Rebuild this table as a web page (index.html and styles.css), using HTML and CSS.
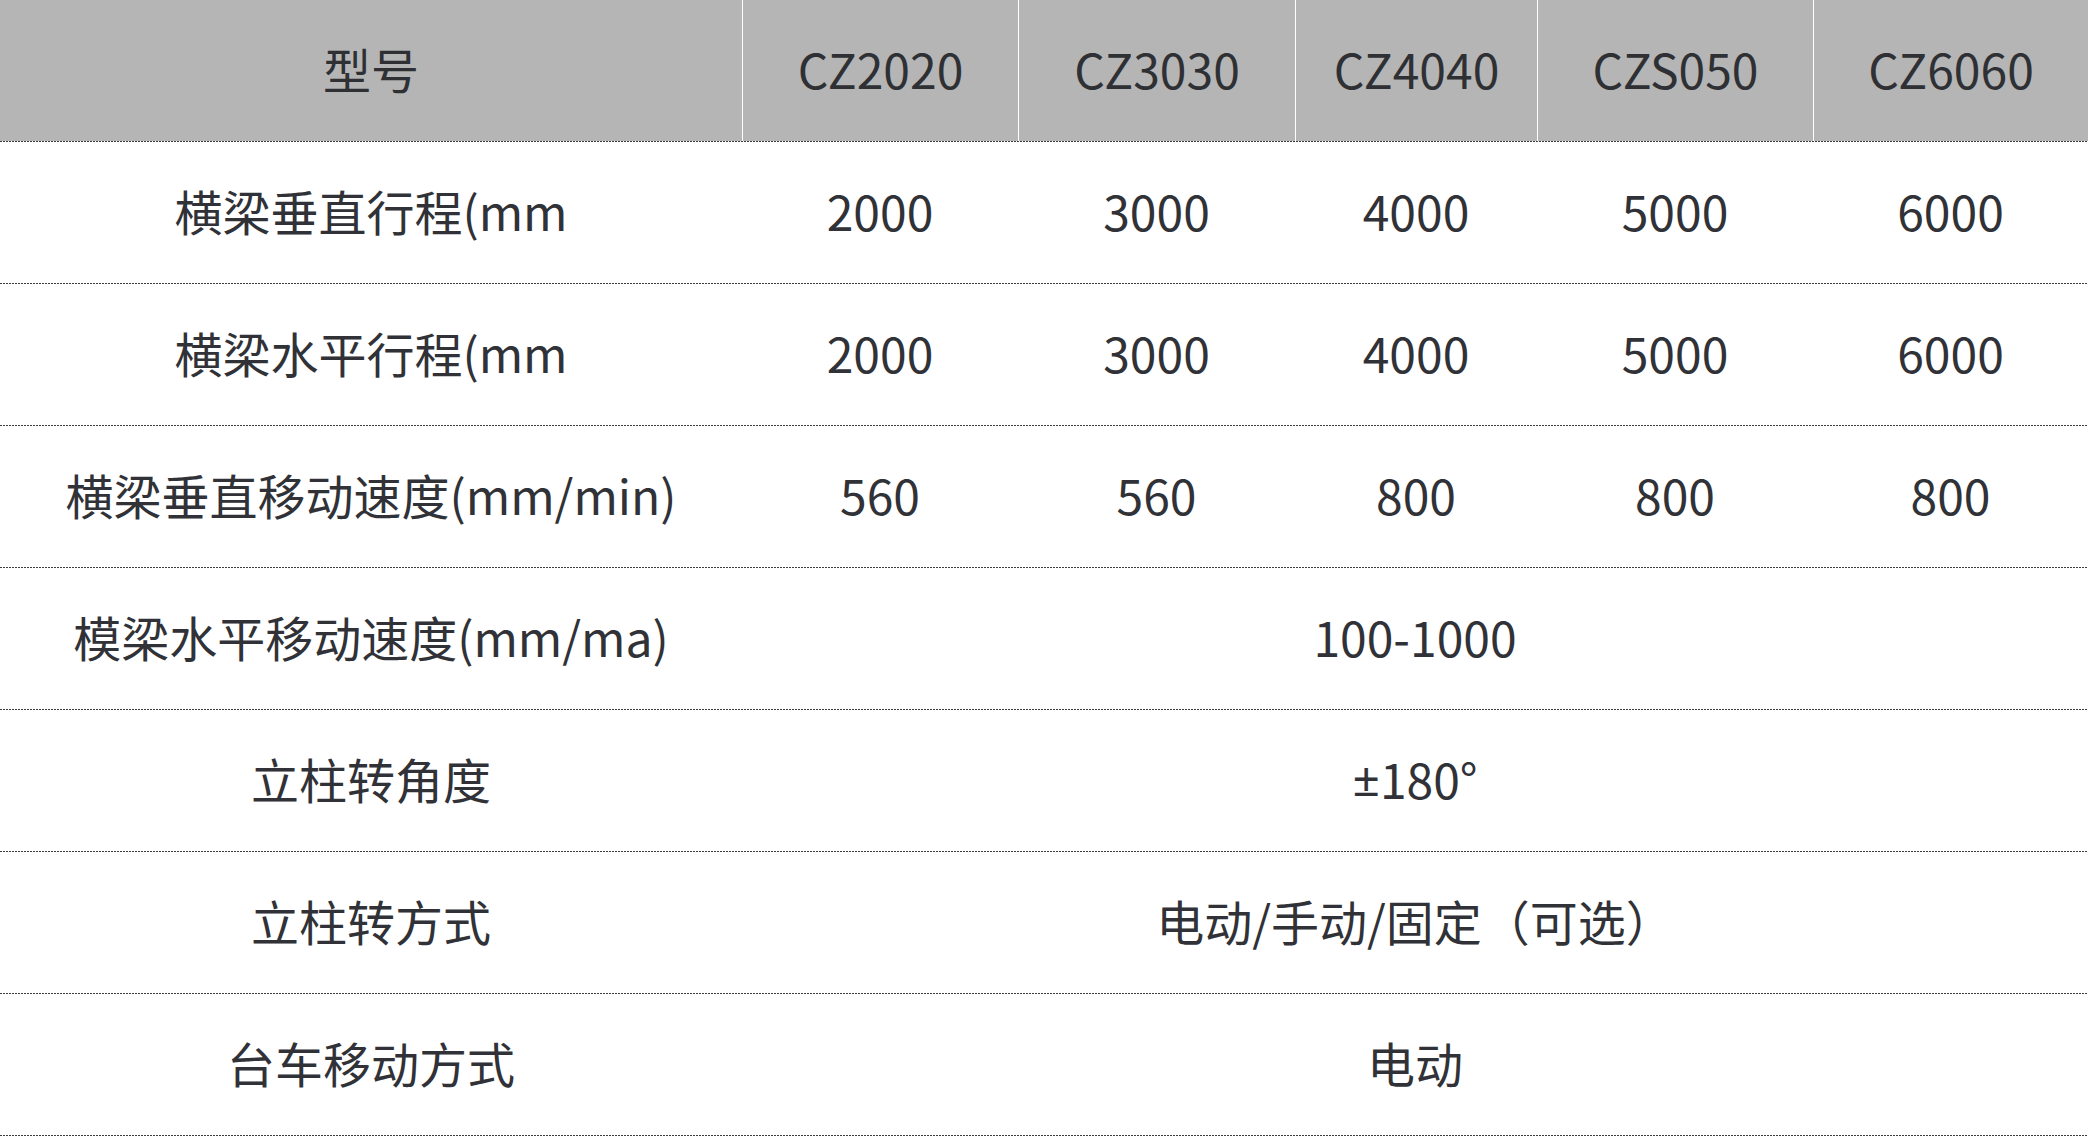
FILE: index.html
```html
<!DOCTYPE html>
<html lang="zh-CN">
<head>
<meta charset="utf-8">
<title>参数表</title>
<link rel="stylesheet" href="styles.css">
</head>
<body>
<div class="spec">
  <div class="row head">
    <div class="cell">型号</div>
    <div class="cell">CZ2020</div>
    <div class="cell">CZ3030</div>
    <div class="cell">CZ4040</div>
    <div class="cell">CZS050</div>
    <div class="cell">CZ6060</div>
  </div>
  <div class="row">
    <div class="cell">横梁垂直行程(mm</div>
    <div class="cell">2000</div>
    <div class="cell">3000</div>
    <div class="cell">4000</div>
    <div class="cell">5000</div>
    <div class="cell">6000</div>
  </div>
  <div class="row">
    <div class="cell">横梁水平行程(mm</div>
    <div class="cell">2000</div>
    <div class="cell">3000</div>
    <div class="cell">4000</div>
    <div class="cell">5000</div>
    <div class="cell">6000</div>
  </div>
  <div class="row">
    <div class="cell">横梁垂直移动速度(mm/min)</div>
    <div class="cell">560</div>
    <div class="cell">560</div>
    <div class="cell">800</div>
    <div class="cell">800</div>
    <div class="cell">800</div>
  </div>
  <div class="row">
    <div class="cell">模梁水平移动速度(mm/ma)</div>
    <div class="cell span">100-1000</div>
  </div>
  <div class="row">
    <div class="cell">立柱转角度</div>
    <div class="cell span"><span class="latin">±</span>180°</div>
  </div>
  <div class="row">
    <div class="cell">立柱转方式</div>
    <div class="cell span">电动/手动/固定（可选）</div>
  </div>
  <div class="row">
    <div class="cell">台车移动方式</div>
    <div class="cell span">电动</div>
  </div>
</div>
</body>
</html>
```

FILE: styles.css
```css
html, body {
  margin: 0;
  padding: 0;
  background: #ffffff;
}

body {
  font-family: "Noto Sans CJK SC", "Noto Sans", sans-serif;
  color: #303237;
}

.spec {
  width: 2088px;
}

.row {
  display: grid;
  grid-template-columns: 742px 276px 277px 242px 276px 275px;
  height: 142px;
  box-sizing: border-box;
  padding-bottom: 1px;
  background-image: repeating-linear-gradient(90deg, #3c3c3c 0 2px, transparent 2px 3px);
  background-size: 100% 1px;
  background-position: left bottom;
  background-repeat: no-repeat;
}

.cell {
  display: flex;
  align-items: center;
  justify-content: center;
  box-sizing: border-box;
  padding-bottom: 5px;
  font-size: 48px;
  line-height: 1;
  white-space: nowrap;
}

.head .cell {
  background: #b5b5b5;
  color: #2e3034;
}

.head .cell + .cell {
  border-left: 1px solid #ffffff;
}

.span {
  grid-column: 2 / span 5;
}

.latin {
  font-family: "Noto Sans", "Open Sans", sans-serif;
}
```
